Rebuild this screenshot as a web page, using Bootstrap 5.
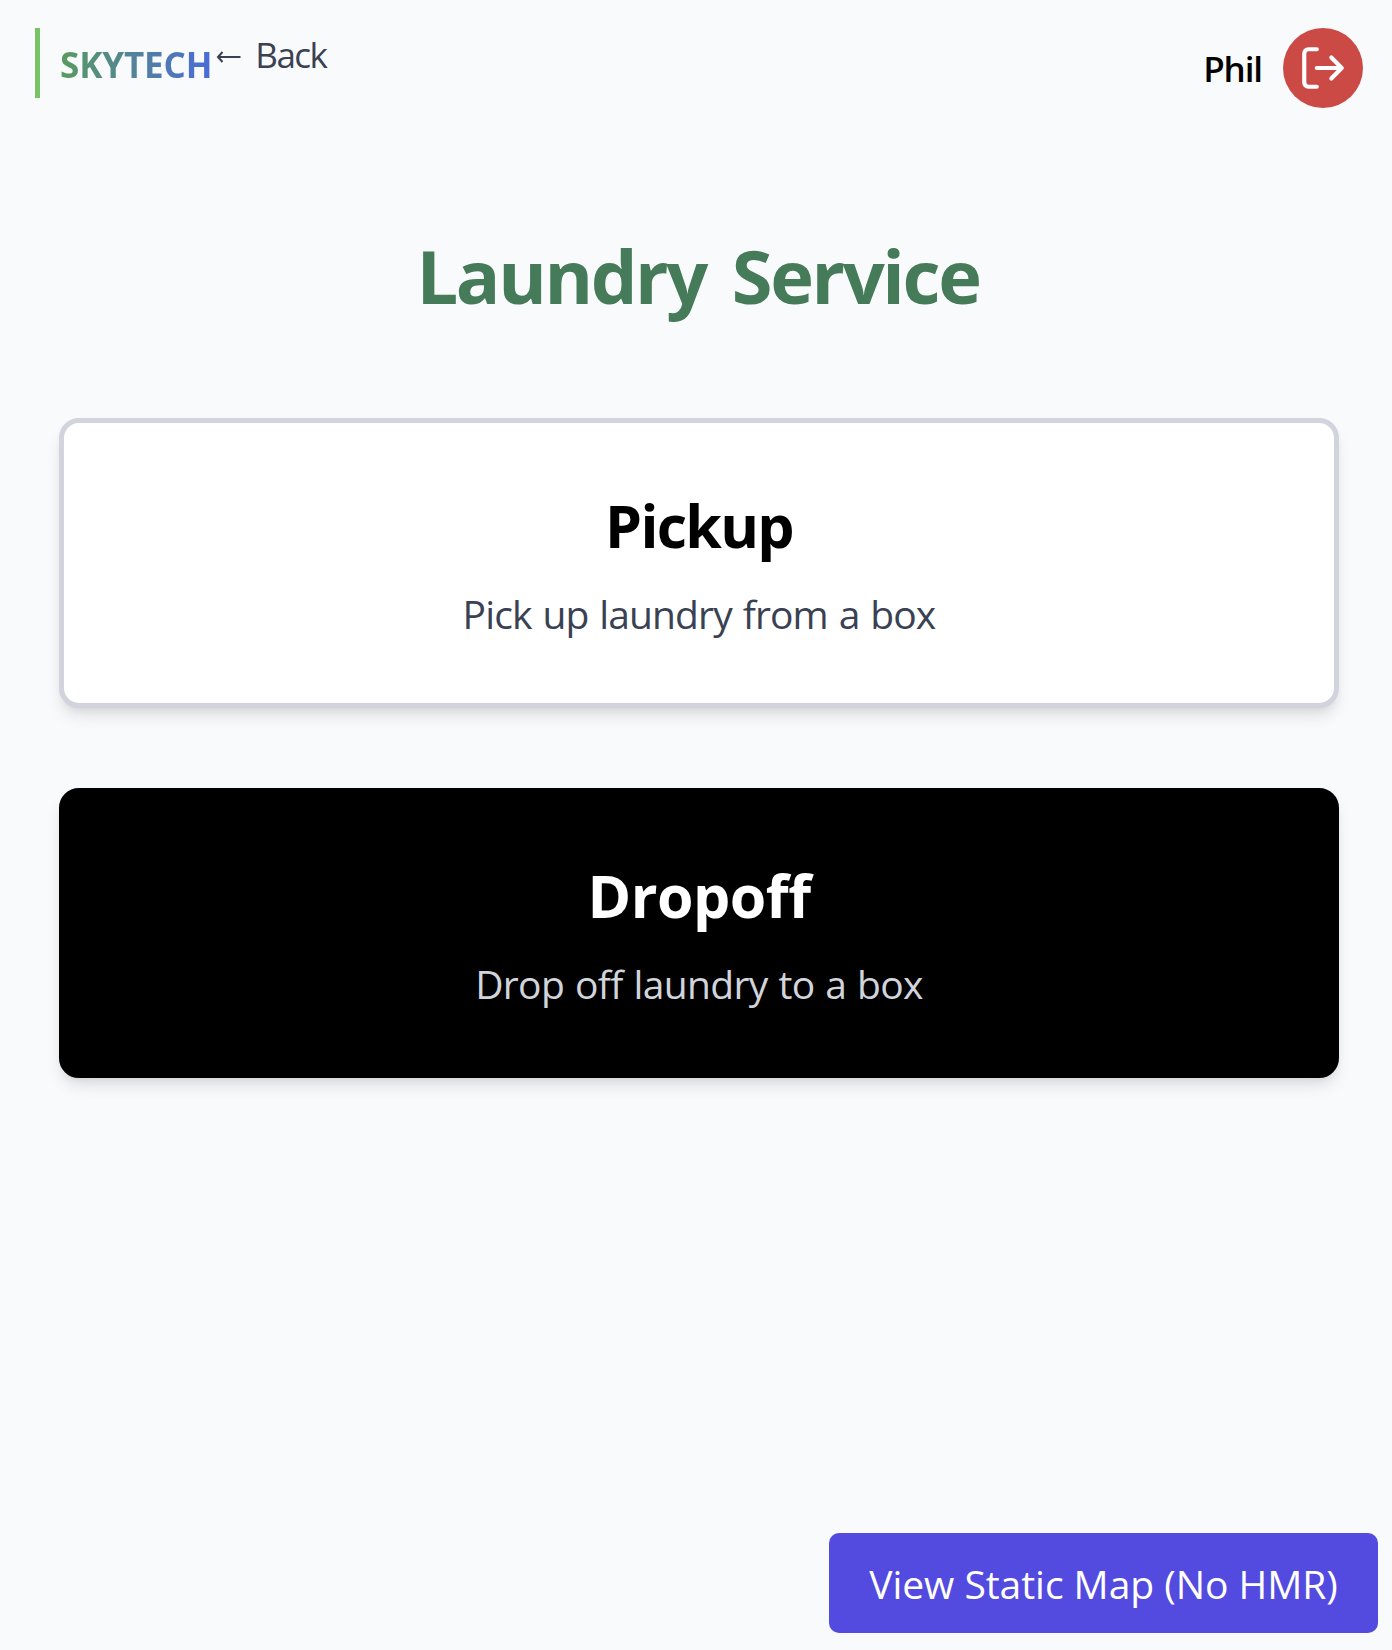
<!DOCTYPE html>
<html lang="en">
<head>
<meta charset="utf-8">
<meta name="viewport" content="width=device-width, initial-scale=1">
<title>Laundry Service</title>
<link href="https://cdn.jsdelivr.net/npm/bootstrap@5.3.0/dist/css/bootstrap.min.css" rel="stylesheet">
<style>
body{background:#f9fafc;font-family:"Open Sans","Noto Sans",sans-serif;color:#000;min-height:1650px}
.topbar{height:108px;padding:28px 29px 0 35px}
.brand-mark{height:70px;border-left:5px solid #78c366;padding-left:20px}
.brand-text{font-size:35px;line-height:73px;letter-spacing:-.15px;background:linear-gradient(90deg,#5a9a5f,#4a6bd8);-webkit-background-clip:text;background-clip:text;color:transparent}
.back-link{margin-left:4px;color:#3a4152;font-size:35px;line-height:53px;letter-spacing:-1.5px}
.back-link svg{margin:5px 14px 0 0}
.user-name{font-size:35px;font-weight:600;line-height:78px;padding-top:2px;letter-spacing:-1.1px;margin-right:21px}
.logout-btn{width:80px;height:80px;background:#cb4a45}
.service-title{margin:118px 0 92px;padding-left:4px;font-size:74px;line-height:100px;color:#467b59;letter-spacing:-2.4px;word-spacing:9px}
.choices{padding:0 53px 0 59px;gap:80px}
.choice{height:290px;border:5px solid #d1d4dd;border-radius:20px;padding-top:62px;background:#fff;color:#000;box-shadow:0 10px 15px -2.5px rgba(0,0,0,.1),0 5px 10px -5px rgba(0,0,0,.1)}
.choice h2{font-size:59px;line-height:80px;margin-bottom:19px}
.choice p{font-size:39px;line-height:60px;color:#3a4152}
.choice-dark{background:#000;border-color:#000;color:#fff}
.choice-dark p{color:#d1d5db}
.t-pickup{letter-spacing:-1.7px}
.t-psub{letter-spacing:-.88px;word-spacing:1.6px}
.t-drop{letter-spacing:-.5px}
.t-dsub{letter-spacing:-.65px;word-spacing:1.3px}
.map-btn{right:14px;bottom:17px;width:549px;height:100px;border-radius:10px;background:#534bdf;color:#fff;font-size:39px;line-height:102px;letter-spacing:-.04px}
.map-btn:hover{color:#fff}
</style>
<script src="https://cdn.jsdelivr.net/npm/bootstrap@5.3.0/dist/js/bootstrap.bundle.min.js"></script>
</head>
<body class="position-relative">
<header class="topbar d-flex align-items-start justify-content-between">
  <div class="d-flex align-items-start">
    <div class="brand-mark"><span class="brand-text d-block fw-bold text-nowrap">SKYTECH</span></div>
    <a href="#" class="back-link d-flex align-items-center text-decoration-none text-nowrap">
      <svg width="25" height="14" viewBox="0 0 25 14" fill="none" stroke="currentColor" stroke-width="2"><path d="M24.500 7H2M6.500 2L2 7l4.500 5"/></svg><span>Back</span>
    </a>
  </div>
  <div class="d-flex align-items-center">
    <span class="user-name">Phil</span>
    <button class="logout-btn btn rounded-circle border-0 p-0 d-flex align-items-center justify-content-center" type="button" aria-label="Log out">
      <svg width="50" height="50" viewBox="0 0 24 24" fill="none" stroke="#fff" stroke-width="2" stroke-linecap="round" stroke-linejoin="round"><path d="M9 21H5a2 2 0 0 1-2-2V5a2 2 0 0 1 2-2h4M16 17l5-5-5-5M21 12H9"/></svg>
    </button>
  </div>
</header>
<main>
  <h1 class="service-title fw-bold text-center">Laundry Service</h1>
  <div class="choices d-flex flex-column">
    <div class="choice text-center">
      <h2 class="fw-bold"><span class="t-pickup">Pickup</span></h2>
      <p class="mb-0"><span class="t-psub">Pick up laundry from a box</span></p>
    </div>
    <div class="choice choice-dark text-center">
      <h2 class="fw-bold"><span class="t-drop">Dropoff</span></h2>
      <p class="mb-0"><span class="t-dsub">Drop off laundry to a box</span></p>
    </div>
  </div>
</main>
<a href="#" class="map-btn btn position-absolute p-0 border-0 text-nowrap">View Static Map (No HMR)</a>
</body>
</html>
